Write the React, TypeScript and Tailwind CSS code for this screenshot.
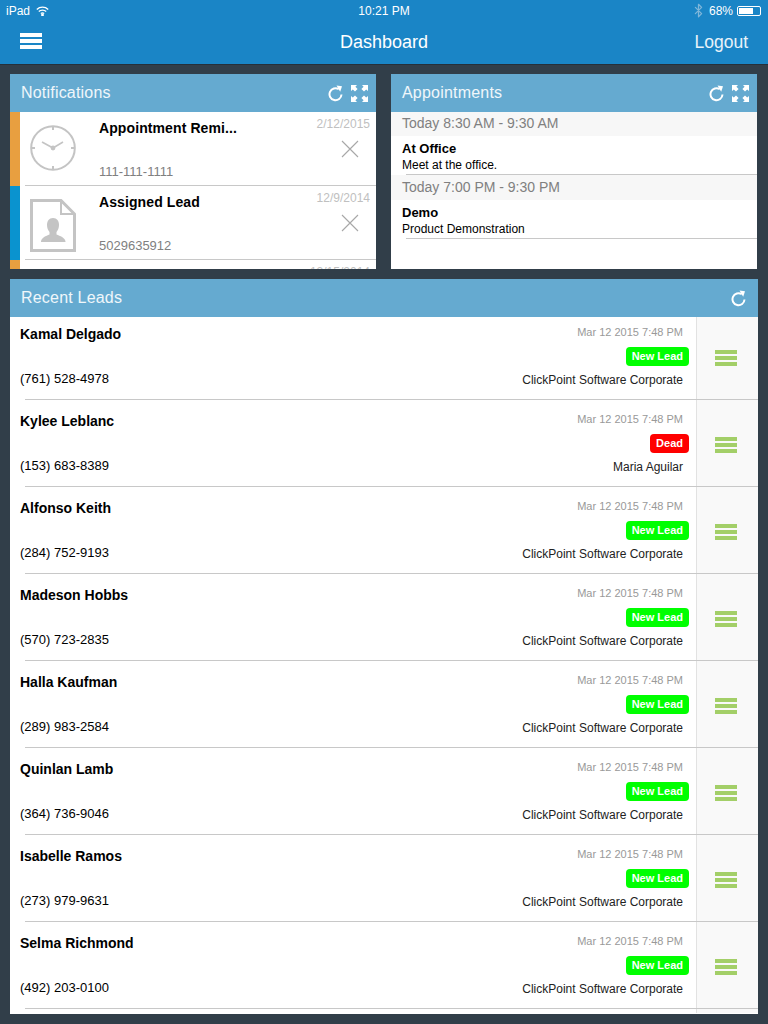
import React from 'react';
import { Bluetooth } from 'lucide-react';

interface Lead {
  name: string;
  phone: string;
  status: string;
  owner: string;
}

const leads: Lead[] = [
  { name: 'Kamal Delgado', phone: '(761) 528-4978', status: 'New Lead', owner: 'ClickPoint Software Corporate' },
  { name: 'Kylee Leblanc', phone: '(153) 683-8389', status: 'Dead', owner: 'Maria Aguilar' },
  { name: 'Alfonso Keith', phone: '(284) 752-9193', status: 'New Lead', owner: 'ClickPoint Software Corporate' },
  { name: 'Madeson Hobbs', phone: '(570) 723-2835', status: 'New Lead', owner: 'ClickPoint Software Corporate' },
  { name: 'Halla Kaufman', phone: '(289) 983-2584', status: 'New Lead', owner: 'ClickPoint Software Corporate' },
  { name: 'Quinlan Lamb', phone: '(364) 736-9046', status: 'New Lead', owner: 'ClickPoint Software Corporate' },
  { name: 'Isabelle Ramos', phone: '(273) 979-9631', status: 'New Lead', owner: 'ClickPoint Software Corporate' },
  { name: 'Selma Richmond', phone: '(492) 203-0100', status: 'New Lead', owner: 'ClickPoint Software Corporate' },
];

const RefreshIcon = () => (
  <svg width="15" height="17" viewBox="0 0 15 17" fill="none">
    <path d="M10.800 4.200A6 6 0 1 0 13.500 9.500" stroke="white" strokeWidth="2" />
    <path d="M8.500 0.500L14 1.200L12.200 6.800Z" fill="white" />
  </svg>
);

const ExpandIcon = () => (
  <svg width="17" height="17" viewBox="0 0 17 17" fill="white">
    <path d="M0 0H6L4.400 1.800L6.600 4L4 6.600L1.800 4.400L0 6Z" />
    <path d="M17 0H11L12.600 1.800L10.400 4L13 6.600L15.200 4.400L17 6Z" />
    <path d="M0 17H6L4.400 15.200L6.600 13L4 10.400L1.800 12.600L0 11Z" />
    <path d="M17 17H11L12.600 15.200L10.400 13L13 10.400L15.200 12.600L17 11Z" />
  </svg>
);

const ClockIcon = () => (
  <svg width="46" height="46" viewBox="0 0 46 46" fill="none" stroke="#c4c4c4">
    <circle cx="23" cy="23" r="21.800" strokeWidth="2" />
    <path d="M23 1V5M23 41V45M1 23H5M41 23H45" strokeWidth="2" />
    <path d="M12 17L23 23L33 17" strokeWidth="1.600" />
    <circle cx="23" cy="23" r="2.400" fill="#c4c4c4" stroke="none" />
  </svg>
);

const LeadFileIcon = () => (
  <svg width="46" height="53" viewBox="0 0 46 53" fill="none">
    <path d="M1.500 1.500H31L44.500 15V51.500H1.500Z" stroke="#c4c4c4" strokeWidth="3" />
    <path d="M31 1.500V15H44.500" stroke="#c4c4c4" strokeWidth="2" />
    <path
      d="M23 19C27 19 29 22 29 26C29 29 28 31 26.500 33V35.500C30 37 35 38.500 35.500 42.500V43H11V42.500C11.500 38.500 16 37 19.500 35.500V33C18 31 17 29 17 26C17 22 19 19 23 19Z"
      fill="#c4c4c4"
    />
  </svg>
);

const CloseIcon = () => (
  <svg width="18" height="18" viewBox="0 0 18 18" stroke="#a8a8a8" strokeWidth="1.100">
    <path d="M1 1L17 17M17 1L1 17" />
  </svg>
);

const PanelHeader = ({ title, expand = true }: { title: string; expand?: boolean }) => (
  <div
    className={`flex h-[38px] shrink-0 items-center bg-[#65aad0] pl-[11px] text-white ${
      expand ? 'pr-[8px]' : 'pr-[12px]'
    }`}
  >
    <span className="flex-1 text-[16px] tracking-[0.2px] text-white/90">{title}</span>
    <div className="flex items-center gap-[8px]">
      <RefreshIcon />
      {expand && <ExpandIcon />}
    </div>
  </div>
);

const NotificationRow = ({
  stripe,
  icon,
  title,
  phone,
  date,
}: {
  stripe: string;
  icon: React.ReactNode;
  title: string;
  phone: string;
  date: string;
}) => (
  <div className="flex h-[74px] shrink-0">
    <div className={`w-[10px] ${stripe}`} />
    <div className="ml-[5px] flex flex-1 border-b border-[#c8c8c8]">
      <div className="flex w-[74px] justify-start pl-[5px] pt-[13px]">{icon}</div>
      <div className="flex flex-1 flex-col justify-between pb-[5px] pt-[7px]">
        <div className="text-[14px] font-bold leading-[18px] tracking-[0.1px] text-black">{title}</div>
        <div className="text-[13px] leading-[16px] text-[#808080]">{phone}</div>
      </div>
      <div className="flex w-[70px] flex-col items-end pr-[6px] pt-[5px]">
        <div className="text-[12px] leading-[14px] text-[#c0c0c0]">{date}</div>
        <div className="mr-[11px] mt-[9px]">
          <CloseIcon />
        </div>
      </div>
    </div>
  </div>
);

const AppointmentItem = ({
  time,
  title,
  note,
  bandHeight,
}: {
  time: string;
  title: string;
  note: string;
  bandHeight: string;
}) => (
  <div>
    <div className={`flex items-center bg-[#f7f7f7] pb-[1px] pl-[11px] text-[14px] text-[#808080] ${bandHeight}`}>
      {time}
    </div>
    <div className="h-[38px] pl-[11px] pt-[5px] text-black">
      <div className="text-[13px] font-bold leading-[16px]">{title}</div>
      <div className="text-[12px] leading-[16px]">{note}</div>
    </div>
    <div className="ml-[15px] h-px bg-[#c8c8c8]" />
  </div>
);

const LeadRow = ({ lead }: { lead: Lead }) => (
  <div className="relative flex h-[87px] shrink-0">
    <div className="flex flex-1 pl-[10px] pr-[7px]">
      <div className="flex flex-1 flex-col pt-[8px] text-black">
        <div className="text-[14px] font-bold leading-[18px]">{lead.name}</div>
        <div className="mt-[27px] text-[13px] leading-[18px]">{lead.phone}</div>
      </div>
      <div className="flex flex-col items-end pt-[8px]">
        <div className="mr-[6px] text-[11px] leading-[14px] text-[#999]">Mar 12 2015 7:48 PM</div>
        <div
          className={`mt-[8px] flex h-[19px] items-center rounded-[4px] px-[6px] text-[11px] font-bold text-white ${
            lead.status === 'Dead' ? 'bg-[#ff0000]' : 'bg-[#00ff00]'
          }`}
        >
          {lead.status}
        </div>
        <div className="mr-[6px] mt-[6px] text-[12px] leading-[16px] text-[#222]">{lead.owner}</div>
      </div>
    </div>
    <div className="flex w-[62px] items-center justify-center border-l border-[#e2e2e2] bg-[#f9f9f9] pr-[4px]">
      <div className="flex w-[22px] flex-col gap-[2px] pb-[5px]">
        <div className="h-[4px] bg-[#a3cf68]" />
        <div className="h-[4px] bg-[#a3cf68]" />
        <div className="h-[4px] bg-[#a3cf68]" />
      </div>
    </div>
    <div className="absolute left-[15px] right-0 top-[82px] h-px bg-[#c8c8c8]" />
  </div>
);

export default function App() {
  return (
    <div className="flex h-[1024px] w-[768px] flex-col overflow-hidden bg-[#313e49] font-['Liberation_Sans',sans-serif]">
      <header className="h-[65px] shrink-0 border-b border-[#25303a] bg-[#1a85c6] text-white">
        <div className="flex h-[21px] items-center justify-between px-[6px] text-[12px]">
          <div className="flex w-[200px] items-center gap-[6px]">
            <span>iPad</span>
            <svg width="13" height="10" viewBox="0 0 13 10" fill="none" stroke="white" strokeWidth="1.400">
              <path d="M0.800 3.400C4 0.400 9 0.400 12.200 3.400M2.800 5.500C4.800 3.700 8.200 3.700 10.200 5.500M4.800 7.500C5.800 6.800 7.200 6.800 8.200 7.500" />
              <circle cx="6.500" cy="9" r="0.700" fill="white" />
            </svg>
          </div>
          <span>10:21 PM</span>
          <div className="flex w-[200px] items-center justify-end gap-[3px] pr-[1px]">
            <Bluetooth size={15} className="text-[#7fb6d9]" />
            <span className="mr-[1px]">68%</span>
            <div className="flex h-[10px] w-[24px] items-center rounded-[2px] border border-white p-[1px]">
              <div className="h-full w-[68%] bg-white" />
            </div>
          </div>
        </div>
        <div className="flex h-[43px] items-center px-[20px]">
          <div className="flex-1">
            <div className="mb-[3px] flex w-[22px] flex-col gap-[2px]">
              <div className="h-[4px] bg-white" />
              <div className="h-[4px] bg-white" />
              <div className="h-[4px] bg-white" />
            </div>
          </div>
          <span className="text-[18px]">Dashboard</span>
          <div className="flex-1 text-right text-[17.500px] text-white/90">Logout</div>
        </div>
      </header>

      <main className="flex min-h-0 flex-1 flex-col pb-[10px] pl-[10px] pr-[10px] pt-[9px]">
        <div className="flex h-[195px] shrink-0 gap-[15px]">
          <section className="flex w-[366px] flex-col overflow-hidden bg-white">
            <PanelHeader title="Notifications" />
            <NotificationRow
              stripe="bg-[#e89f40]"
              icon={<ClockIcon />}
              title="Appointment Remi..."
              phone="111-111-1111"
              date="2/12/2015"
            />
            <NotificationRow
              stripe="bg-[#0a93cf]"
              icon={<LeadFileIcon />}
              title="Assigned Lead"
              phone="5029635912"
              date="12/9/2014"
            />
            <NotificationRow
              stripe="bg-[#e89f40]"
              icon={null}
              title=""
              phone=""
              date="12/15/2014"
            />
          </section>
          <section className="flex w-[366px] flex-col overflow-hidden bg-white">
            <PanelHeader title="Appointments" />
            <AppointmentItem
              time="Today 8:30 AM - 9:30 AM"
              title="At Office"
              note="Meet at the office."
              bandHeight="h-[24px]"
            />
            <AppointmentItem
              time="Today 7:00 PM - 9:30 PM"
              title="Demo"
              note="Product Demonstration"
              bandHeight="h-[25px]"
            />
          </section>
        </div>
        <section className="mt-[10px] flex min-h-0 flex-1 flex-col overflow-hidden bg-white">
          <PanelHeader title="Recent Leads" expand={false} />
          {leads.map((lead) => (
            <LeadRow key={lead.name} lead={lead} />
          ))}
        </section>
      </main>
    </div>
  );
}
